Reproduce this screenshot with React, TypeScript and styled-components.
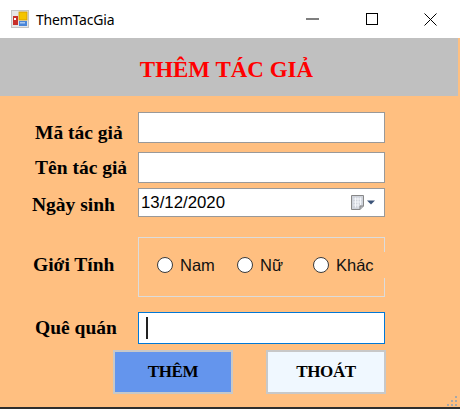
import React from "react";
import styled, { createGlobalStyle } from "styled-components";

const Global = createGlobalStyle`
  html, body { margin: 0; padding: 0; background: #ffffff; }
  body { width: 460px; height: 409px; overflow: hidden; }
`;

const Window = styled.div`
  position: relative;
  width: 460px;
  height: 409px;
  display: flex;
  flex-direction: column;
  background: #ffbf80;
`;

const TitleBar = styled.div`
  height: 38px;
  flex-shrink: 0;
  background: #ffffff;
  display: flex;
  align-items: center;
`;

const AppIcon = styled.svg`
  margin-left: 11px;
  width: 18px;
  height: 18px;
  flex-shrink: 0;
`;

const TitleText = styled.span`
  flex: 1;
  margin-left: 7px;
  font-family: "Noto Sans", sans-serif;
  font-size: 14px;
  letter-spacing: -0.2px;
  color: #000000;
`;

const CaptionButton = styled.div`
  width: 59px;
  height: 38px;
  display: flex;
  align-items: center;
  justify-content: center;
`;

const Header = styled.div`
  height: 58px;
  flex-shrink: 0;
  margin-right: 2px;
  box-sizing: border-box;
  padding: 6px 5px 0 0;
  background: #c0c0c0;
  display: flex;
  align-items: center;
  justify-content: center;
  font-family: "Liberation Serif", serif;
  font-weight: bold;
  font-size: 23px;
  color: #ff0000;
`;

const Body = styled.div`
  flex: 1;
  display: flex;
  flex-direction: column;
  padding-top: 16px;
`;

const Row = styled.div<{ $mt: number; $h: number }>`
  display: flex;
  align-items: center;
  margin-top: ${(p) => p.$mt}px;
  height: ${(p) => p.$h}px;
`;

const Label = styled.div<{ $x: number; $dy?: number }>`
  width: 138px;
  flex-shrink: 0;
  box-sizing: border-box;
  padding-left: ${(p) => p.$x}px;
  margin-top: ${(p) => 2 * (p.$dy ?? 0)}px;
  font-family: "Liberation Serif", serif;
  font-weight: bold;
  font-size: 19.5px;
  color: #000000;
  white-space: nowrap;
`;

const TextBox = styled.div<{ $focused?: boolean }>`
  width: 247px;
  height: 100%;
  box-sizing: border-box;
  border: 1px solid ${(p) => (p.$focused ? "#0078d7" : "#999999")};
  background: #ffffff;
  display: flex;
  align-items: center;
`;

const Caret = styled.span`
  margin-left: 7px;
  width: 2px;
  height: 22px;
  background: #222222;
`;

const DateText = styled.span`
  flex: 1;
  padding-left: 2px;
  font-family: "Liberation Sans", Arial, sans-serif;
  font-size: 16.8px;
  color: #000000;
`;

const DropIcons = styled.div`
  display: flex;
  align-items: center;
  gap: 3px;
  padding-right: 9px;
`;

const GroupBox = styled.div`
  width: 247px;
  height: 60px;
  box-sizing: border-box;
  border: 1px solid #dcdcdc;
  display: flex;
  align-items: center;
  padding: 0 0 4px 18px;
`;

const RadioItem = styled.label<{ $w: number; $cover?: boolean }>`
  width: ${(p) => p.$w}px;
  flex-shrink: 0;
  height: 26px;
  display: flex;
  align-items: center;
  gap: 7px;
  background: ${(p) => (p.$cover ? "#ffbf80" : "transparent")};
  font-family: "Liberation Sans", Arial, sans-serif;
  font-size: 16.5px;
  color: #111111;
`;

const RadioCircle = styled.span`
  width: 16px;
  height: 16px;
  box-sizing: border-box;
  border-radius: 50%;
  border: 1.3px solid #3a3a3a;
  background: #ffffff;
  flex-shrink: 0;
`;

const ButtonRow = styled.div`
  display: flex;
  gap: 33px;
  margin-top: 6px;
  padding-left: 113px;
`;

const Button = styled.div<{ $bg: string }>`
  width: 120px;
  height: 44px;
  box-sizing: border-box;
  border: 2px solid #c8c8c8;
  background: ${(p) => p.$bg};
  display: flex;
  align-items: center;
  justify-content: center;
  font-family: "Liberation Serif", serif;
  font-weight: bold;
  font-size: 17px;
  letter-spacing: -0.4px;
  color: #000000;
`;

const DesktopStrip = styled.div`
  margin-top: auto;
  height: 2px;
  background: #2e2e2e;
`;

const Grip = styled.svg`
  position: absolute;
  right: 3px;
  bottom: 3px;
  width: 10px;
  height: 10px;
`;

export default function App() {
  return (
    <>
      <Global />
      <Window>
        <TitleBar>
          <AppIcon viewBox="0 0 18 18">
            <rect x="0.5" y="0.5" width="17" height="17" fill="#e6e6e6" stroke="#c4c4c4" />
            <rect x="2" y="6" width="5" height="9" fill="#c8302a" />
            <rect x="3" y="8" width="2" height="2" fill="#ffffff" />
            <rect x="8" y="2" width="8" height="8" fill="#f5c400" stroke="#d09a00" strokeWidth="0.8" />
            <rect x="8" y="11" width="8" height="5" fill="#4a86d8" />
            <rect x="9" y="12" width="5" height="1.5" fill="#a9c8f0" />
          </AppIcon>
          <TitleText>ThemTacGia</TitleText>
          <CaptionButton>
            <svg width="14" height="2" viewBox="0 0 14 2">
              <rect x="0" y="0.5" width="13" height="1" fill="#000" />
            </svg>
          </CaptionButton>
          <CaptionButton>
            <svg width="12" height="12" viewBox="0 0 12 12">
              <rect x="0.5" y="0.5" width="11" height="11" fill="none" stroke="#000" strokeWidth="1" />
            </svg>
          </CaptionButton>
          <CaptionButton>
            <svg width="13" height="13" viewBox="0 0 13 13">
              <path d="M0.5 0.5 L12.5 12.5 M12.5 0.5 L0.5 12.5" stroke="#000" strokeWidth="1" />
            </svg>
          </CaptionButton>
        </TitleBar>

        <Header>THÊM TÁC GIẢ</Header>

        <Body>
          <Row $mt={0} $h={31}>
            <Label $x={35} $dy={5}>Mã tác giả</Label>
            <TextBox />
          </Row>
          <Row $mt={9} $h={31}>
            <Label $x={35}>Tên tác giả</Label>
            <TextBox />
          </Row>
          <Row $mt={5} $h={29}>
            <Label $x={32} $dy={2}>Ngày sinh</Label>
            <TextBox>
              <DateText>13/12/2020</DateText>
              <DropIcons>
                <svg width="13" height="15" viewBox="0 0 13 15">
                  <path d="M0.5 0.5 H12.5 V11 L9 14.5 H0.5 Z" fill="#d0d4dc" stroke="#888888" />
                  <path d="M2.5 4 H10.5 M2.5 7 H10.5 M2.5 10 H8 M4.5 2.5 V12.5 M7 2.5 V12.5 M9.5 2.5 V10" stroke="#f4f6fa" strokeWidth="1" />
                  <path d="M12.5 11 L9 11 L9 14.5" fill="#b0b4bc" stroke="#888888" />
                </svg>
                <svg width="8" height="5" viewBox="0 0 8 5">
                  <path d="M0 0.5 H8 L4 4.5 Z" fill="#3b5378" />
                </svg>
              </DropIcons>
            </TextBox>
          </Row>
          <Row $mt={20} $h={60}>
            <Label $x={33} $dy={-2}>Giới Tính</Label>
            <GroupBox>
              <RadioItem $w={80}>
                <RadioCircle />
                Nam
              </RadioItem>
              <RadioItem $w={76}>
                <RadioCircle />
                Nữ
              </RadioItem>
              <RadioItem $w={74} $cover>
                <RadioCircle />
                Khác
              </RadioItem>
            </GroupBox>
          </Row>
          <Row $mt={15} $h={32}>
            <Label $x={35}>Quê quán</Label>
            <TextBox $focused>
              <Caret />
            </TextBox>
          </Row>
          <ButtonRow>
            <Button $bg="#6495ed">THÊM</Button>
            <Button $bg="#f0f8ff">THOÁT</Button>
          </ButtonRow>
          <DesktopStrip />
        </Body>

        <Grip viewBox="0 0 10 10">
          <rect x="8" y="0" width="2" height="2" fill="#a8a8a8" />
          <rect x="4" y="4" width="2" height="2" fill="#a8a8a8" />
          <rect x="8" y="4" width="2" height="2" fill="#a8a8a8" />
          <rect x="0" y="8" width="2" height="2" fill="#a8a8a8" />
          <rect x="4" y="8" width="2" height="2" fill="#a8a8a8" />
          <rect x="8" y="8" width="2" height="2" fill="#a8a8a8" />
        </Grip>
      </Window>
    </>
  );
}
